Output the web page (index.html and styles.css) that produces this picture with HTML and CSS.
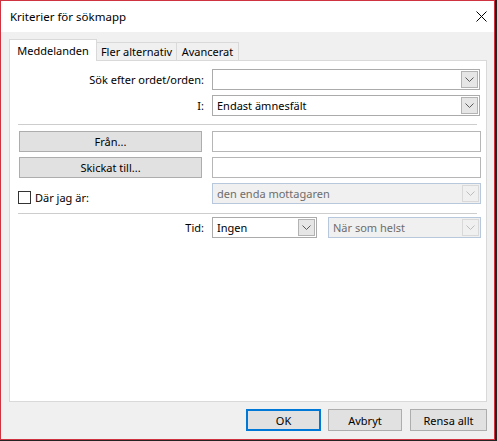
FILE: index.html
```html
<!DOCTYPE html>
<html lang="sv">
<head>
<meta charset="utf-8">
<title>Kriterier för sökmapp</title>
<link rel="stylesheet" href="styles.css">
</head>
<body>
<div class="window">
  <div class="titlebar">
    <span class="title">Kriterier för sökmapp</span>
    <svg class="close" width="11" height="11" viewBox="0 0 11 11"><path d="M0.5 0.5L10.5 10.5M10.5 0.5L0.5 10.5" stroke="#000" stroke-width="1" fill="none"/></svg>
  </div>
  <div class="client">
    <div class="tabs">
      <div class="tab tab-active">Meddelanden</div>
      <div class="tab tab-fler">Fler alternativ</div>
      <div class="tab tab-avancerat">Avancerat</div>
    </div>
    <div class="panel">
      <div class="form-grid">
        <div class="lbl">Sök efter ordet/orden:</div>
        <div class="combo combo-full">
          <span class="val"></span>
          <span class="dd"><svg width="9" height="5" viewBox="0 0 9 5"><path d="M0.5 0.5L4.5 4.5L8.5 0.5" stroke="#5a5a5a" fill="none"/></svg></span>
        </div>
        <div class="lbl">I:</div>
        <div class="combo combo-full">
          <span class="val">Endast ämnesfält</span>
          <span class="dd"><svg width="9" height="5" viewBox="0 0 9 5"><path d="M0.5 0.5L4.5 4.5L8.5 0.5" stroke="#5a5a5a" fill="none"/></svg></span>
        </div>
      </div>
      <hr class="sep sep-first">
      <div class="form-grid">
        <button class="btn btn-wide">Från...</button>
        <div class="input"></div>
        <button class="btn btn-wide">Skickat till...</button>
        <div class="input"></div>
        <label class="check"><span class="box"></span>Där jag är:</label>
        <div class="combo combo-disabled">
          <span class="val">den enda mottagaren</span>
          <span class="dd"><svg width="9" height="5" viewBox="0 0 9 5"><path d="M0.5 0.5L4.5 4.5L8.5 0.5" stroke="#bdbdbd" fill="none"/></svg></span>
        </div>
      </div>
      <hr class="sep sep-second">
      <div class="form-grid">
        <div class="lbl">Tid:</div>
        <div class="pair">
          <div class="combo combo-ingen">
            <span class="val">Ingen</span>
            <span class="dd"><svg width="9" height="5" viewBox="0 0 9 5"><path d="M0.5 0.5L4.5 4.5L8.5 0.5" stroke="#5a5a5a" fill="none"/></svg></span>
          </div>
          <div class="combo combo-disabled combo-nar">
            <span class="val">När som helst</span>
            <span class="dd"><svg width="9" height="5" viewBox="0 0 9 5"><path d="M0.5 0.5L4.5 4.5L8.5 0.5" stroke="#bdbdbd" fill="none"/></svg></span>
          </div>
        </div>
      </div>
    </div>
    <div class="actions">
      <button class="btn btn-action btn-default">OK</button>
      <button class="btn btn-action btn-avbryt">Avbryt</button>
      <button class="btn btn-action btn-rensa">Rensa allt</button>
    </div>
  </div>
</div>
</body>
</html>
```
FILE: styles.css
```css
* {
  box-sizing: border-box;
}

html,
body {
  margin: 0;
  padding: 0;
}

body {
  width: 497px;
  height: 441px;
  background: #232323;
  font-family: "Noto Sans", "Segoe UI", sans-serif;
  font-size: 11px;
  color: #000;
}

.window {
  width: 495px;
  height: 440px;
  border: 1px solid #cf3340;
  background: #f0f0f0;
  display: flex;
  flex-direction: column;
}

.titlebar {
  flex: none;
  height: 31px;
  background: #fff;
  display: flex;
  align-items: center;
  justify-content: space-between;
  padding: 0 7px 0 9px;
}

.title {
  font-size: 11.5px;
}

.close {
  display: block;
}

.client {
  flex: 1;
  display: flex;
  flex-direction: column;
  padding: 7px 0 0 8px;
}

/* Tabs */
.tabs {
  position: relative;
  z-index: 1;
  display: flex;
  align-items: flex-end;
  height: 22px;
  margin-bottom: -1px;
}

.tab {
  height: 18px;
  margin-bottom: 1px;
  margin-left: -1px;
  border: 1px solid #d9d9d9;
  border-bottom: none;
  background: #f0f0f0;
  display: flex;
  align-items: center;
  justify-content: center;
  white-space: nowrap;
}

.tab-active {
  height: 22px;
  margin-bottom: 0;
  margin-left: 0;
  width: 88px;
  background: #fff;
  position: relative;
  z-index: 2;
}

.tab-fler {
  width: 81px;
}

.tab-avancerat {
  width: 63px;
}

/* Panel */
.panel {
  flex: none;
  width: 478px;
  height: 342px;
  background: #fff;
  border: 1px solid #d9d9d9;
  padding: 8px 5px 0 8px;
}

.form-grid {
  display: grid;
  grid-template-columns: 187px 269px;
  grid-auto-rows: 21px;
  column-gap: 7px;
  row-gap: 5px;
}

.lbl {
  align-self: center;
  text-align: right;
  padding-right: 1px;
  white-space: nowrap;
}

.sep {
  border: none;
  border-top: 1px solid #cdcdcd;
  height: 0;
  margin: 0 4px 0 0;
}

.sep-first {
  margin-top: 8px;
  margin-bottom: 6px;
}

.sep-second {
  margin-top: 9px;
  margin-bottom: 3px;
}

/* Combo boxes */
.combo {
  display: flex;
  align-items: center;
  height: 21px;
  border: 1px solid #ababab;
  background: #fff;
  padding: 1px;
}

.combo-full {
  width: 268px;
}

.val {
  flex: 1;
  padding-left: 3px;
  white-space: nowrap;
  overflow: hidden;
}

.dd {
  flex: none;
  width: 17px;
  height: 17px;
  border: 1px solid #b3b3b3;
  background: #e6e6e6;
  display: flex;
  align-items: center;
  justify-content: center;
}

.combo-disabled {
  border-color: #b7c7dc;
  background: #f0f0f0;
  color: #6d6d6d;
}

.combo-disabled .dd {
  background: #f0f0f0;
  border-color: #d9d9d9;
}

.pair {
  display: flex;
  gap: 11px;
}

.combo-ingen {
  width: 105px;
}

.combo-nar {
  width: 153px;
}

/* Text inputs */
.input {
  height: 21px;
  border: 1px solid #b6b6b6;
  background: #fff;
}

/* Buttons */
.btn {
  font: inherit;
  color: #000;
  background: #e1e1e1;
  border: 1px solid #adadad;
  padding: 0;
  margin: 0;
}

.btn-wide {
  width: 183px;
  height: 21px;
  margin-left: 1px;
}

/* Checkbox */
.check {
  align-self: end;
  display: flex;
  align-items: center;
  gap: 4px;
  height: 13px;
  white-space: nowrap;
}

.box {
  flex: none;
  width: 13px;
  height: 13px;
  border: 1px solid #333;
  background: #fff;
}

/* Dialog buttons */
.actions {
  display: flex;
  justify-content: flex-end;
  width: 478px;
  margin-top: 7px;
}

.btn-action {
  height: 22px;
}

.btn-default {
  width: 75px;
  border: 2px solid #0078d7;
}

.btn-avbryt {
  width: 74px;
  margin-left: 7px;
}

.btn-rensa {
  width: 77px;
  margin-left: 8px;
}
```
